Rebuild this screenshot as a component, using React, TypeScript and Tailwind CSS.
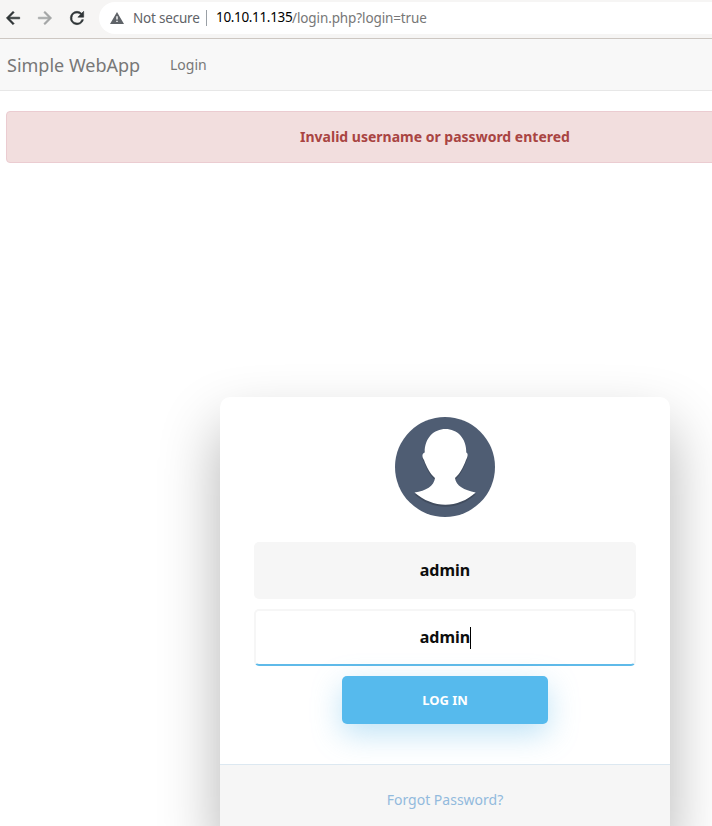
import React from "react";

function BrowserBar() {
  return (
    <header className="flex h-[39px] w-full shrink-0 items-start border-b border-[#cdc7c2] bg-[#f6f5f4]">
      <div className="flex h-9 shrink-0 items-center gap-3 pl-[3px]">
        <svg width="20" height="20" viewBox="0 0 24 24" fill="#2e3436">
          <path d="M20 11H7.83l5.59-5.59L12 4l-8 8 8 8 1.41-1.41L7.83 13H20v-2z" stroke="#2e3436" strokeWidth=".7" />
        </svg>
        <svg width="20" height="20" viewBox="0 0 24 24" fill="#a3a5a5">
          <path d="M12 4l-1.41 1.41L16.17 11H4v2h12.17l-5.58 5.59L12 20l8-8z" stroke="#a3a5a5" strokeWidth=".7" />
        </svg>
        <svg width="20" height="20" viewBox="0 0 24 24" fill="#2e3436">
          <path d="M17.65 6.35A7.96 7.96 0 0 0 12 4a8 8 0 1 0 7.73 10h-2.08A6 6 0 1 1 12 6c1.66 0 3.14.69 4.22 1.78L13 11h7V4l-2.35 2.35z" stroke="#2e3436" strokeWidth=".7" />
        </svg>
      </div>
      <div className="ml-[12px] mt-[2px] flex h-8 w-[700px] shrink-0 items-center rounded-l-full bg-white pl-[11px] text-[14px]">
        <svg width="14" height="12" viewBox="0 0 14 12" fill="#5f6368" className="shrink-0">
          <path fillRule="evenodd" d="M7 0 14 12H0ZM6.3 4.2v3.2h1.400V4.2ZM6.3 8.700v1.400h1.400V8.700Z" />
        </svg>
        <span className="ml-[9px] w-[66px] whitespace-nowrap text-[13.5px] tracking-[-0.2px] text-[#5f6368]">Not secure</span>
        <span className="ml-[7px] h-4 w-px bg-[#9aa0a6]" />
        <span className="ml-[9px] w-[76px] whitespace-nowrap pb-px text-[13.5px] tracking-[-0.34px] text-black">10.10.11.135</span>
        <span className="whitespace-nowrap text-[13.5px] tracking-[-0.11px] text-[#777]">/login.php?login=true</span>
      </div>
    </header>
  );
}

const bustPath =
  "M50.500 12C39 12 29.500 21 29.700 35.500c-3 1-2.700 4.500-.7 7.500 3 8 6 13.500 11 18-1 8-9 13-20.500 14.500C38 91.700 63 91.700 80.700 75.500 69 73 61 69 60 61c5-4.500 8-10 11-18 2-3.500 2.300-6.500.300-7.500C71.500 21 62 12 50.500 12Z";

function Avatar() {
  return (
    <svg width="100" height="100" viewBox="0 0 100 100">
      <circle cx="50" cy="50" r="50" fill="#4f5d73" />
      <path d={bustPath} fill="#414c5e" transform="translate(0 2)" />
      <path d={bustPath} fill="#fff" />
    </svg>
  );
}

function LoginCard() {
  return (
    <main className="ml-[220px] mt-[234px] flex h-[438px] w-[450px] shrink-0 flex-col items-center overflow-hidden rounded-[10px] bg-white shadow-[0_30px_60px_0_rgba(0,0,0,0.3)]">
      <div className="flex h-[367px] w-full shrink-0 flex-col items-center pt-5">
        <Avatar />
        <div className="mt-[25px] flex h-[57px] w-[382px] shrink-0 items-center justify-center rounded-[5px] bg-[#f6f6f6] pb-[2px] text-[16px] font-bold text-[#0d0d0d]">
          admin
        </div>
        <div className="mt-[10px] flex h-[57px] w-[382px] shrink-0 items-center justify-center rounded-[5px] border-2 border-[#f6f6f6] border-b-[#5fbae9] bg-white text-[16px] font-bold text-[#0d0d0d]">
          <span className="pb-[2px]">admin</span>
          <span className="-mr-px h-[22px] w-px bg-black" />
        </div>
        <button className="mt-[10px] h-12 w-[206px] shrink-0 rounded-[5px] bg-[#56baed] pt-[2px] text-[13px] font-bold text-white shadow-[0_10px_30px_0_rgba(95,186,233,0.4)]">
          LOG IN
        </button>
      </div>
      <div className="flex h-[71px] w-full shrink-0 items-start justify-center border-t border-[#dce8f1] bg-[#f6f6f6] pt-[25px] text-[14px] leading-5 text-[#92badd]">
        <a>Forgot Password?</a>
      </div>
    </main>
  );
}

export default function App() {
  return (
    <div className="flex h-[826px] w-[712px] flex-col overflow-hidden bg-white font-['Noto_Sans',sans-serif]">
      <BrowserBar />
      <nav className="flex h-[52px] w-full shrink-0 items-center border-b border-[#e7e7e7] bg-[#f8f8f8] pl-[7px] text-[#777]">
        <span className="w-[163px] pt-[2px] text-[18px]">Simple WebApp</span>
        <span className="text-[14px]">Login</span>
      </nav>
      <div className="ml-[6px] mt-5 flex h-[52px] w-[858px] shrink-0 items-center justify-center rounded border border-[#ebccd1] bg-[#f2dede] pb-[2px] text-[14px] font-bold text-[#a94442]">
        Invalid username or password entered
      </div>
      <LoginCard />
    </div>
  );
}
